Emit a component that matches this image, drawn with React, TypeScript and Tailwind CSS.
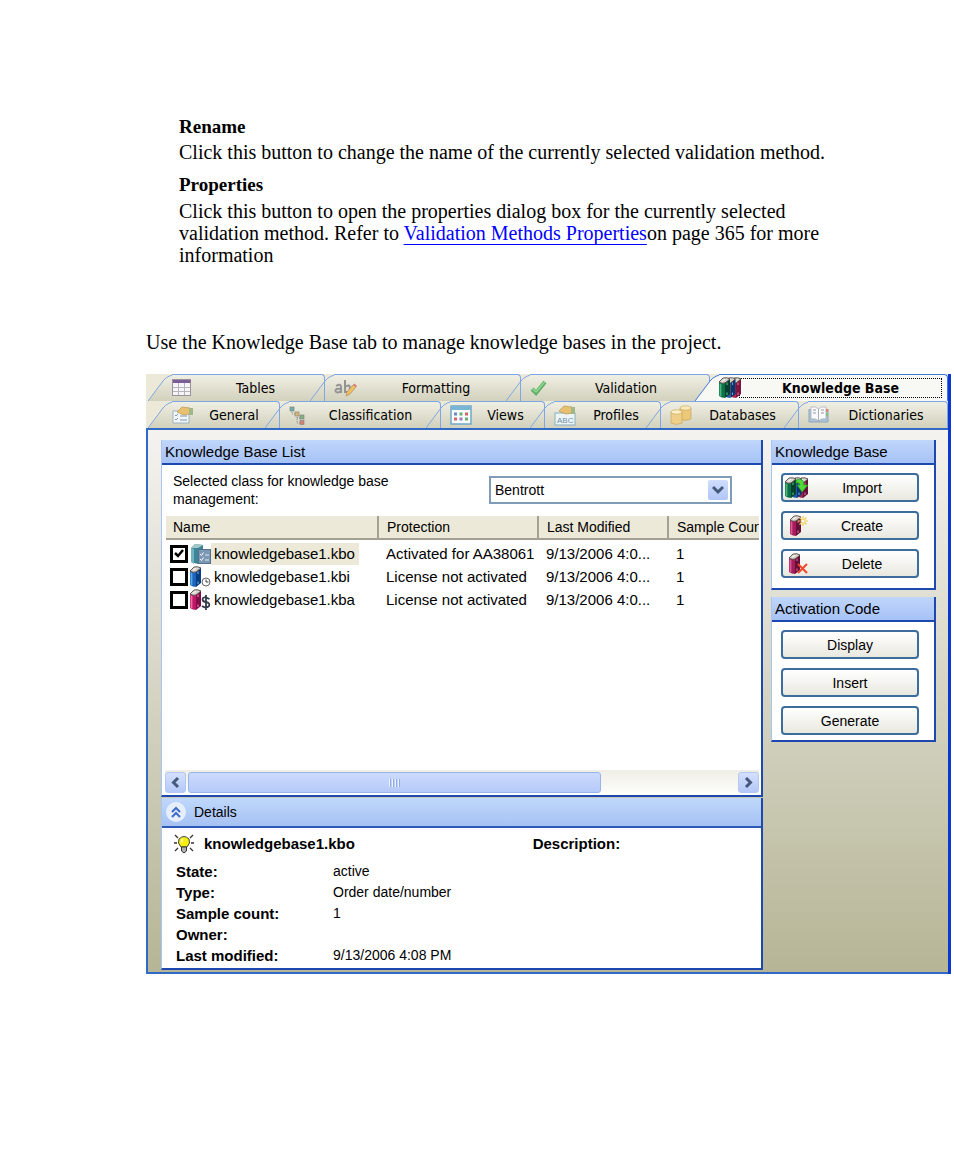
import React, { useState } from "react";
import clsx from "clsx";

interface ITab {
  label: string;
  icon: React.ReactNode;
}

interface IKnowledgeBase {
  name: string;
  protection: string;
  modified: string;
  samples: number;
  icon: React.ReactNode;
}

const Book = ({ x = 0, light = "#d85c94", main = "#a81c5c", dark = "#641038" }) => (
  <g transform={`translate(${x} 0)`}>
    <path d="M6 6 L11 2 V17 L6 21 Z" fill={dark} />
    <path d="M0 5 Q3 7 6 6 V21 Q3 21 0 19 Z" fill={main} />
    <path d="M1.500 6.500 V19" stroke={light} strokeWidth="1.800" />
    <path d="M0 5 L4 1 Q8 0 11 2 L6 6 Q3 7 0 5 Z" fill="#d8d4cc" stroke="#3c3434" strokeWidth=".8" />
    <path d="M3 4.500 L6 2" stroke="#fff" />
    <path d="M8 5.500 V8 M8 15.500 V18" stroke={light} strokeWidth="1.200" />
  </g>
);

const BooksIcon = () => (
  <svg width="23" height="22" viewBox="0 0 23 22">
    <Book x={11} light="#e8648c" main="#b42450" dark="#7c1440" />
    <Book x={5.5} light="#58a0dc" main="#1c5ca8" dark="#0c3468" />
    <Book x={0} light="#48b878" main="#0c7048" dark="#084030" />
  </svg>
);

const TableIcon = () => (
  <svg width="20" height="18" viewBox="0 0 20 18">
    <rect x=".5" y=".5" width="18" height="16" fill="#f6f4f6" stroke="#9a929a" />
    <rect x="1" y="1" width="17.500" height="3" fill="#7c5c98" />
    <path d="M1 8.500 H18 M1 12.500 H18 M6.500 4 V16 M12.500 4 V16" stroke="#b8b4bc" />
  </svg>
);

const FormatIcon = () => (
  <svg width="23" height="20" viewBox="0 0 23 20">
    <g fill="none" stroke="#949494" strokeWidth="2">
      <path d="M2 8 Q7 5 7 9 V15 M7 11 Q1 10 1.500 13 Q3 16 7 13" />
      <path d="M11 2 V15 M11 9 Q16 5 16 11 Q15 16 11 13" />
    </g>
    <path d="M12 18 L13 14 L19 7 L22 9 L16 16 Z" fill="#f0c060" stroke="#b89068" strokeWidth=".8" />
    <path d="M19 7 L20.500 5.500 L23 8 L22 9 Z" fill="#e07878" />
  </svg>
);

const CheckIcon = () => (
  <svg width="18" height="18" viewBox="0 0 18 18">
    <path d="M2 10 L6 14 L15 3" fill="none" stroke="#60b068" strokeWidth="4" />
    <path d="M2 9.500 L6 13 L15 2.500" fill="none" stroke="#90d890" strokeWidth="1.500" />
  </svg>
);

const Hand = () => (
  <>
    <path d="M5 6 L10 1 L18 2 V8 L12 9 L7 7 Z" fill="#e8c070" stroke="#b89858" strokeWidth=".7" />
    <path d="M17 2 H21 V9 H17 Z" fill="#a0b888" />
  </>
);

const GeneralIcon = () => (
  <svg width="22" height="18" viewBox="0 0 22 18">
    <rect x="1" y="5" width="16" height="12" fill="#f2f6f8" stroke="#9cb4c4" />
    <path d="M3 9 l1 1 2-2 M3 13 l1 1 2-2 M8 10 H15 M8 14 H15" fill="none" stroke="#8098b0" />
    <Hand />
  </svg>
);

const TreeIcon = () => (
  <svg width="17" height="19" viewBox="0 0 17 19">
    <path d="M3 4 V8 H7 M8 9 V17 H11 M8 12 H11" fill="none" stroke="#888" strokeDasharray="1 1" />
    <g stroke="#888" strokeWidth=".7">
      <rect x="1" y="1" width="4" height="4" fill="#68b0a0" />
      <rect x="6" y="6" width="4" height="4" fill="#d8b868" />
      <rect x="11" y="9" width="4" height="4" fill="#80b080" />
      <rect x="11" y="14.500" width="4" height="4" fill="#d88070" />
    </g>
  </svg>
);

const ViewsIcon = () => (
  <svg width="22" height="20" viewBox="0 0 22 20">
    <rect x="1" y="1" width="20" height="18" fill="#fafcfc" stroke="#70a8c8" strokeWidth="1.500" />
    <rect x="1" y="1" width="20" height="4" fill="#78b4d4" />
    <path d="M4 9 h3" stroke="#6888c8" strokeWidth="3" />
    <path d="M9.500 9 h3 M15 14 h3" stroke="#68b070" strokeWidth="3" />
    <path d="M15 9 h3 M4 14 h3" stroke="#d06868" strokeWidth="3" />
    <path d="M9.500 14 h3" stroke="#a078c0" strokeWidth="3" />
  </svg>
);

const ProfilesIcon = () => (
  <svg width="23" height="21" viewBox="0 0 23 21">
    <rect x="1" y="8" width="20" height="12" fill="#eef4f6" stroke="#88b0c0" />
    <Hand />
    <text x="3" y="18" fontSize="8" fontFamily="Liberation Sans" fill="#6890a8">ABC</text>
  </svg>
);

const DatabaseIcon = () => (
  <svg width="22" height="20" viewBox="0 0 22 20">
    <g stroke="#c0a058" strokeWidth=".6">
      <path d="M10 3 V14 Q15 17 21 14 V3 Z" fill="#ecc878" />
      <ellipse cx="15.500" cy="3" rx="5.500" ry="2.200" fill="#faeab8" />
      <path d="M1 7 V18 Q6 21 12 18 V7 Z" fill="#f0d088" />
      <ellipse cx="6.500" cy="7" rx="5.500" ry="2.200" fill="#fcf0c4" />
    </g>
  </svg>
);

const DictionaryIcon = () => (
  <svg width="22" height="18" viewBox="0 0 22 18">
    <path d="M1 3 V16 H20 V3" fill="#b0c4d8" stroke="#8ca4bc" />
    <path d="M3 1 Q8 0 10.500 3 V15 Q8 12 3 13 Z M18 1 Q13 0 10.500 3 V15 Q13 12 18 13 Z" fill="#fafafa" stroke="#a0a8b0" strokeWidth=".7" />
    <path d="M5 4 H8 M5 7 H8 M13 4 H16 M13 7 H16" stroke="#9098a8" />
    <path d="M19 3 V6" stroke="#e08070" strokeWidth="2" />
    <path d="M19 7 V10" stroke="#80c080" strokeWidth="2" />
  </svg>
);

const ActiveBaseIcon = () => (
  <svg width="21" height="22" viewBox="0 0 21 22">
    <path d="M1 5 L5 1 L13 2 V18 L8 21 L1 19 Z" fill="#3c8498" />
    <path d="M1 5 L4 6 V21 L1 19 Z" fill="#70b4c0" />
    <path d="M1 5 L5 1 L13 2 L8 5 Z" fill="#a4c8c8" />
    <rect x="8.500" y="6.500" width="12" height="14" fill="#7c98b4" stroke="#56708c" />
    <path d="M10 11 l1.500 1.500 2-3 M10 16 l1.500 1.500 2-3" fill="none" stroke="#fff" />
    <path d="M15 12 H19 M15 17 H19" stroke="#dce8f0" />
  </svg>
);

const ClockBaseIcon = () => (
  <svg width="21" height="22" viewBox="0 0 21 22">
    <Book light="#58a8e8" main="#1c64bc" dark="#0c3c80" />
    <circle cx="16" cy="16" r="4" fill="#fafafa" stroke="#666" />
    <path d="M16 13.500 V16 H18.500" fill="none" stroke="#444" />
  </svg>
);

const MoneyBaseIcon = () => (
  <svg width="21" height="22" viewBox="0 0 21 22">
    <Book light="#f06ca4" main="#c01868" dark="#800c48" />
    <path d="M19.500 10 Q13 6.500 12.500 10.500 Q13 13 16 13 Q20.500 14 19 17 Q16 20 12 17 M16 6 V21" fill="none" stroke="#333c48" strokeWidth="1.800" />
  </svg>
);

const ImportIcon = () => (
  <svg width="24" height="22" viewBox="0 0 24 22">
    <Book x={12} light="#d86098" main="#982458" />
    <Book x={6} light="#58a0dc" main="#1c5ca8" dark="#0c3468" />
    <Book x={0} light="#48b878" main="#0c7048" dark="#084030" />
    <path d="M11 3 Q19 0 19 8 H23 L17 15 L12 8 H15 Q15 5 11 6 Z" fill="#50d838" stroke="#209020" strokeWidth=".7" />
  </svg>
);

const CreateIcon = () => (
  <svg width="24" height="22" viewBox="0 0 24 22">
    <Book x={5} />
    <path d="M18 1 V11 M13 6 H23 M14.500 2.500 L21.500 9.500 M21.500 2.500 L14.500 9.500" stroke="#f0cc50" strokeWidth="1.200" />
    <circle cx="18" cy="6" r="1.500" fill="#fff" />
  </svg>
);

const DeleteIcon = () => (
  <svg width="24" height="22" viewBox="0 0 24 22">
    <Book x={4} />
    <path d="M13 11 L22 20 M22 11 L13 20" stroke="#f04828" strokeWidth="2" />
  </svg>
);

const BulbIcon = () => (
  <svg width="20" height="20" viewBox="0 0 20 20">
    <path d="M1 1 L4 4 M19 1 L16 4 M0 9 H3 M17 9 H20 M1 17 L4 14 M19 17 L16 14" stroke="#333" strokeWidth="1.300" />
    <path d="M7 13 Q3 9 5 5 Q10 0 15 5 Q17 9 13 13 Z" fill="#f4ee10" stroke="#444" />
    <path d="M7 6 L9 4 L8 10" fill="#fffde0" />
    <path d="M7.500 13 H12.500 V17 L10 19 L7.500 17 Z" fill="#b0b0b0" stroke="#333" />
  </svg>
);

const topTabs: ITab[] = [
  { label: "Tables", icon: <TableIcon /> },
  { label: "Formatting", icon: <FormatIcon /> },
  { label: "Validation", icon: <CheckIcon /> },
  { label: "Knowledge Base", icon: <BooksIcon /> },
];

const bottomTabs: ITab[] = [
  { label: "General", icon: <GeneralIcon /> },
  { label: "Classification", icon: <TreeIcon /> },
  { label: "Views", icon: <ViewsIcon /> },
  { label: "Profiles", icon: <ProfilesIcon /> },
  { label: "Databases", icon: <DatabaseIcon /> },
  { label: "Dictionaries", icon: <DictionaryIcon /> },
];

const bases: IKnowledgeBase[] = [
  { name: "knowledgebase1.kbo", protection: "Activated for AA38061", modified: "9/13/2006 4:0...", samples: 1, icon: <ActiveBaseIcon /> },
  { name: "knowledgebase1.kbi", protection: "License not activated", modified: "9/13/2006 4:0...", samples: 1, icon: <ClockBaseIcon /> },
  { name: "knowledgebase1.kba", protection: "License not activated", modified: "9/13/2006 4:0...", samples: 1, icon: <MoneyBaseIcon /> },
];

const details = [
  { label: "State:", value: "active" },
  { label: "Type:", value: "Order date/number" },
  { label: "Sample count:", value: "1" },
  { label: "Owner:", value: "" },
  { label: "Last modified:", value: "9/13/2006 4:08 PM" },
];

const Tab = ({ tab, first, active }: { tab: ITab; first: boolean; active: boolean }) => (
  <button
    role="tab"
    aria-selected={active}
    className={clsx("flex h-[27px] min-w-0 items-stretch", !first && "-ml-[15px]", active && "font-bold")}
  >
    <svg width="30" height="27" viewBox="0 0 30 27" className="-mr-[6px] shrink-0">
      <defs>
        <linearGradient id="tabFill" x1="0" y1="0" x2="0" y2="27" gradientUnits="userSpaceOnUse">
          <stop offset="0" stopColor="#f0efe4" />
          <stop offset="1" stopColor="#d2d1bd" />
        </linearGradient>
      </defs>
      <path
        d={first || active ? "M0 27 L15 7 Q20 .5 30 .5 V27 Z" : "M15 27 V7 Q20 .5 30 .5 V27 Z"}
        fill={active ? "#f8f8f5" : "url(#tabFill)"}
      />
      {!first && !active && <path d="M14.500 7 V27" stroke="#7ea6e4" />}
      <path d="M0 27 L15 7 Q20 .5 30 .5" fill="none" stroke={active ? "#3f7ad8" : "#7ea6e4"} />
    </svg>
    <span
      className={clsx(
        "flex min-w-0 flex-1 items-center rounded-tr-sm border-t border-r pr-[5px]",
        active ? "border-[#3f7ad8] bg-[#f8f8f5]" : "border-[#7ea6e4] bg-linear-to-b from-[#f0efe4] to-[#d2d1bd]"
      )}
    >
      <span className="relative z-10 shrink-0">{tab.icon}</span>
      <span
        className={clsx(
          "flex-1 text-center whitespace-nowrap",
          active && "-ml-[3px] border border-dotted border-black leading-[18px]"
        )}
      >
        {tab.label}
      </span>
    </span>
  </button>
);

const Panel = ({ title, children }: { title: string; children: React.ReactNode }) => (
  <section className="border-r-2 border-b-2 border-l border-r-[#1c48b0] border-b-[#1c48b0] border-l-[#a8c4f4] bg-white">
    <h2 className="h-[25px] border-b-2 border-[#1c48b0] bg-linear-to-b from-[#c0d6fb] to-[#a6c2f6] pl-[3px] leading-[24px]">
      {title}
    </h2>
    {children}
  </section>
);

const ActionButton = ({ label, icon }: { label: string; icon?: React.ReactNode }) => (
  <button className="flex h-[29px] w-full items-center rounded-[4px] border-2 border-[#3d6d9c] bg-linear-to-b from-white to-[#e9e8e0] px-[2px] text-sm">
    {icon}
    <span className="flex-1 text-center">{label}</span>
  </button>
);

const KnowledgeBaseTable = () => {
  const [checked, setChecked] = useState([true, false, false]);

  return (
    <div className="mr-[2px] ml-1 h-[254px] overflow-hidden">
      <table className="w-[620px] table-fixed border-collapse text-left">
        <thead>
          <tr className="h-[23px] border-b-2 border-[#a3a193] bg-[#ece9d8] text-sm">
            <th className="w-[212px] border-r-2 border-[#a3a193] pl-[7px] font-normal">Name</th>
            <th className="w-[160px] border-r-2 border-[#a3a193] pl-2 font-normal">Protection</th>
            <th className="w-[130px] border-r-2 border-[#a3a193] pl-2 font-normal">Last Modified</th>
            <th className="pl-2 font-normal whitespace-nowrap">Sample Count</th>
          </tr>
        </thead>
        <tbody>
          <tr className="h-[3px]" />
          {bases.map((base, i) => (
            <tr key={base.name} className="h-[23px] leading-[22px] whitespace-nowrap">
              <td className="p-0">
                <label className="flex items-center pl-1">
                  <span className="relative flex">
                    <input
                      type="checkbox"
                      checked={checked[i]}
                      onChange={() => setChecked(checked.map((c, j) => (j === i ? !c : c)))}
                      className="size-[18px] appearance-none border-[3px] border-black bg-white"
                    />
                    {checked[i] && (
                      <svg width="18" height="18" viewBox="0 0 18 18" className="pointer-events-none absolute inset-0">
                        <path d="M5 8 L8 11 L13 5" fill="none" stroke="#000" strokeWidth="2.500" />
                      </svg>
                    )}
                  </span>
                  <span className="ml-[2px]">{base.icon}</span>
                  <span className={clsx("pr-1 pl-[3px]", i === 0 && "bg-[#ece9d8]")}>{base.name}</span>
                </label>
              </td>
              <td className="py-0 pr-0 pl-2">{base.protection}</td>
              <td className="py-0 pr-0 pl-2">{base.modified}</td>
              <td className="py-0 pr-0 pl-2">{base.samples}</td>
            </tr>
          ))}
        </tbody>
      </table>
    </div>
  );
};

const ScrollArrow = ({ label, d }: { label: string; d: string }) => (
  <button
    aria-label={label}
    className="grid h-[21px] w-[21px] place-items-center rounded-[3px] border border-[#b4c8f4] bg-linear-to-b from-[#d4e0fd] to-[#b4c8f8]"
  >
    <svg width="11" height="13" viewBox="0 0 11 13">
      <path d={d} fill="none" stroke="#44597c" strokeWidth="3" />
    </svg>
  </button>
);

const App: React.FC = () => {
  return (
    <main className="bg-white pt-[116px] pr-[3px] pb-48 pl-[146px] font-['Liberation_Sans',Arial,sans-serif] text-[15px] text-black">
      <article className="pl-[33px] font-['Liberation_Serif','Times_New_Roman',serif] text-[20px] leading-[22px]">
        <h3 className="text-[19px] font-bold">Rename</h3>
        <p className="mt-[3px]">Click this button to change the name of the currently selected validation method.</p>
        <h3 className="mt-[11px] text-[19px] font-bold">Properties</h3>
        <p className="mt-[4px]">
          Click this button to open the properties dialog box for the currently selected
          <br />
          validation method. Refer to{" "}
          <a href="#validation-methods" className="text-[#0000ff] underline decoration-1 underline-offset-4">
            Validation Methods Properties
          </a>
          on page 365 for more
          <br />
          information
        </p>
      </article>
      <p className="mt-[65px] font-['Liberation_Serif','Times_New_Roman',serif] text-[20px] leading-[22px]">
        Use the Knowledge Base tab to manage knowledge bases in the project.
      </p>

      <div className="mt-[21px] border-r-[3px] border-[#0a38d0] bg-[#ece9d8]">
        <nav role="tablist" className="pl-[2px] font-['DejaVu_Sans_Condensed','DejaVu_Sans',sans-serif] text-sm">
          <div className="grid grid-cols-[177fr_196fr_189fr_238fr]">
            {topTabs.map((tab, i) => (
              <Tab key={tab.label} tab={tab} first={i === 0} active={i === 3} />
            ))}
          </div>
          <div className="grid grid-cols-[132fr_161fr_104fr_116fr_138fr_149fr]">
            {bottomTabs.map((tab, i) => (
              <Tab key={tab.label} tab={tab} first={i === 0} active={false} />
            ))}
          </div>
        </nav>

        <div className="flex items-start gap-2 border-t-2 border-b-2 border-l-2 border-[#316ac5] bg-linear-to-b from-[#f4f3f0] to-[#b6b596] pt-[10px] pr-3 pb-[2px] pl-[13px]">
          <div className="flex min-w-0 flex-1 flex-col gap-px">
            <Panel title="Knowledge Base List">
              <div className="flex items-start justify-between pt-[7px] pr-[29px] pb-2 pl-[11px]">
                <label htmlFor="baseClass" className="text-sm leading-[18px]">
                  Selected class for knowledge base
                  <br />
                  management:
                </label>
                <div className="relative mt-[4px] w-[243px]">
                  <select
                    id="baseClass"
                    className="h-[28px] w-full appearance-none border-2 border-[#7f9db9] bg-white pl-[4px] text-sm"
                  >
                    <option>Bentrott</option>
                  </select>
                  <span className="pointer-events-none absolute top-1 right-1 grid size-[20px] place-items-center rounded-[2px] bg-linear-to-b from-[#d0defc] to-[#b0c6f6]">
                    <svg width="12" height="10" viewBox="0 0 12 10">
                      <path d="M1 2 L6 7 L11 2" fill="none" stroke="#44597c" strokeWidth="3" />
                    </svg>
                  </span>
                </div>
              </div>
              <KnowledgeBaseTable />
              <div className="mr-[2px] ml-[3px] flex h-[25px] items-center bg-linear-to-b from-[#efeee6] to-[#fefefc]">
                <ScrollArrow label="Scroll left" d="M8 2 L3.500 6.500 L8 11" />
                <div className="ml-[2px] flex-1">
                  <div className="flex h-[21px] w-[75%] items-center justify-center gap-px rounded-[3px] border border-[#98b4ec] bg-linear-to-b from-[#ccdafd] to-[#b6caf9]">
                    {[0, 1, 2, 3].map((grip) => (
                      <span key={grip} className="h-2 w-[2px] border-r border-[#8ca8e8] bg-[#eef4fe]" />
                    ))}
                  </div>
                </div>
                <ScrollArrow label="Scroll right" d="M3 2 L7.500 6.500 L3 11" />
              </div>
            </Panel>

            <section className="border-r-2 border-b-2 border-l border-r-[#1c48b0] border-b-[#1c48b0] border-l-[#a8c4f4] bg-white">
              <h2 className="flex h-[30px] items-center border-b-2 border-[#2c58b8] bg-linear-to-b from-[#c0d8fb] to-[#a6c2f4] pl-[4px]">
                <button aria-label="Collapse details" className="grid size-[20px] place-items-center rounded-full bg-[#e6eefc]">
                  <svg width="12" height="12" viewBox="0 0 12 12">
                    <path d="M2 6 L6 2 L10 6 M2 11 L6 7 L10 11" fill="none" stroke="#3c6cc8" strokeWidth="2" />
                  </svg>
                </button>
                <span className="pl-2 text-sm">Details</span>
              </h2>
              <div className="grid grid-cols-[366fr_233fr] pt-[5px] pb-[3px] pl-[12px]">
                <h3 className="flex h-[22px] items-center gap-[10px] font-bold">
                  <BulbIcon />
                  knowledgebase1.kbo
                </h3>
                <h3 className="leading-[22px] font-bold">Description:</h3>
              </div>
              <dl className="grid grid-cols-[157px_1fr] pt-[3px] pb-[2px] pl-[14px] leading-[21px]">
                {details.map((row) => (
                  <React.Fragment key={row.label}>
                    <dt className="font-bold">{row.label}</dt>
                    <dd className="text-sm leading-[21px]">{row.value}</dd>
                  </React.Fragment>
                ))}
              </dl>
            </section>
          </div>

          <aside className="flex w-[165px] shrink-0 flex-col gap-[7px]">
            <Panel title="Knowledge Base">
              <div className="flex flex-col gap-[9px] pt-2 pr-[15px] pb-[10px] pl-[9px]">
                <ActionButton label="Import" icon={<ImportIcon />} />
                <ActionButton label="Create" icon={<CreateIcon />} />
                <ActionButton label="Delete" icon={<DeleteIcon />} />
              </div>
            </Panel>
            <Panel title="Activation Code">
              <div className="flex flex-col gap-[9px] pt-2 pr-[15px] pb-[5px] pl-[9px]">
                <ActionButton label="Display" />
                <ActionButton label="Insert" />
                <ActionButton label="Generate" />
              </div>
            </Panel>
          </aside>
        </div>
      </div>
    </main>
  );
};

export default App;
